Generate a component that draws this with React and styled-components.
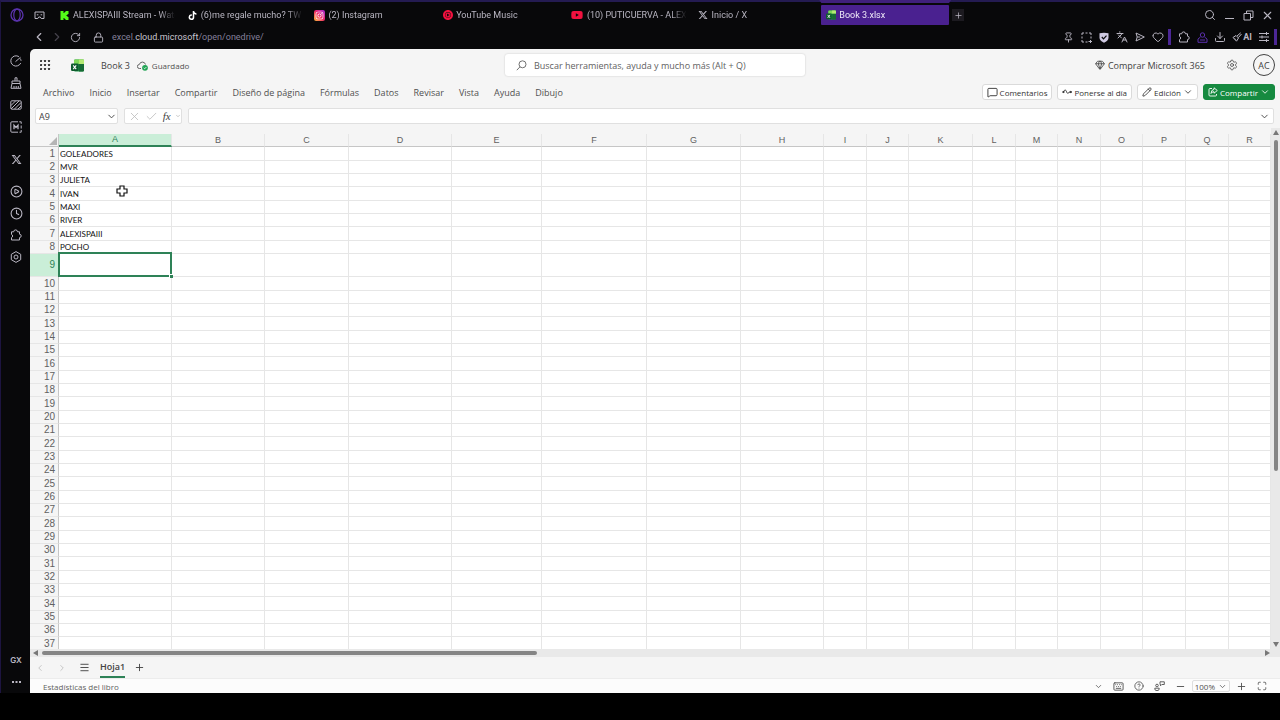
import styled, { createGlobalStyle, css } from "styled-components";
import {
  Check,
  ChevronDown,
  ChevronLeft,
  ChevronRight,
  CircleHelp,
  CirclePlay,
  Clock,
  Download,
  Gem,
  Heart,
  Keyboard,
  Languages,
  Lock,
  Maximize,
  Menu,
  MessageSquare,
  Minus,
  Pencil,
  Pin,
  Plus,
  RotateCw,
  Search,
  Settings,
  X,
} from "lucide-react";
import { FaYoutube, FaTiktok, FaXTwitter, FaInstagram } from "react-icons/fa6";
import { SiKick, SiYoutubemusic } from "react-icons/si";

const GlobalStyle = createGlobalStyle`
  * {
    box-sizing: border-box;
  }
  body {
    margin: 0;
    background: #000;
    overflow: hidden;
  }
  button, input {
    font: inherit;
    color: inherit;
    margin: 0;
    padding: 0;
    border: 0;
    background: none;
  }
  a {
    color: inherit;
    text-decoration: none;
  }
  svg {
    display: block;
    flex: none;
  }
`;

const Browser = styled.div`
  display: flex;
  flex-direction: column;
  height: 100vh;
  padding-bottom: 27px;
  background: #000;
  color: #b9b6c2;
  font-family: Roboto, "Liberation Sans", sans-serif;
  font-size: 9px;
`;

const Chrome = styled.header`
  background: #08080a;
  border-top: 2px solid #241b52;
  border-left: 1px solid #1d1440;
`;

const TabBar = styled.div`
  display: flex;
  align-items: center;
  height: 26px;
  padding: 0 7px 0 9px;
`;

const OperaButton = styled.button`
  width: 24px;
`;

const Workspace = styled.button`
  width: 21px;
`;

const Tabs = styled.nav`
  display: flex;
  flex: 0 1 895px;
  min-width: 0;
`;

const Tab = styled.a`
  position: relative;
  display: flex;
  align-items: center;
  flex: 1 1 0;
  min-width: 0;
  gap: 4px;
  height: 20px;
  padding: 0 2px 0 5px;
  border-radius: 1px;
  ${({ $active }) =>
    $active &&
    css`
      background: #4a2190;
      color: #efeaf8;
      margin-right: 1px;
      &::before {
        content: "";
        position: absolute;
        left: -2px;
        right: -2px;
        top: -5px;
        height: 3px;
        background: #40207c;
        clip-path: polygon(0 0, 100% 0, calc(100% - 2px) 100%, 2px 100%);
      }
    `}
`;

const TabIcon = styled.span`
  display: flex;
  justify-content: center;
  width: ${({ $wide }) => ($wide ? 12 : 9)}px;
`;

const TabTitle = styled.span`
  flex: 1;
  overflow: hidden;
  white-space: nowrap;
  mask-image: linear-gradient(to right, #000 80%, transparent 95%);
`;

const NewTab = styled.button`
  display: flex;
  align-items: center;
  justify-content: center;
  width: 12px;
  height: 12px;
  margin-left: 2px;
  background: #1c1a20;
`;

const WindowControls = styled.div`
  display: flex;
  align-items: center;
  gap: 7px;
  margin-left: auto;
`;

const AddressRow = styled.div`
  display: flex;
  align-items: center;
  height: 21px;
  padding: 0 3px 3px 32px;
`;

const NavButtons = styled.div`
  display: flex;
  align-items: center;
  gap: 6px;
  margin-right: 12px;
`;

const IconButton = styled.button`
  display: flex;
  align-items: center;
  justify-content: center;
  width: 12px;
  color: ${({ $color }) => $color || "inherit"};
`;

const Address = styled.div`
  display: flex;
  align-items: center;
  flex: 1;
  gap: 8px;
`;

const Url = styled.span`
  color: #85809a;
  b {
    font-weight: 400;
    color: #c9c6d0;
  }
`;

const Extensions = styled.div`
  display: flex;
  align-items: center;
  gap: 6px;
`;

const Divider = styled.span`
  width: 3px;
  height: 16px;
  margin: 0 ${({ $gap }) => $gap || 0}px 0 -2px;
  background: #4c2796;
`;

const AiButton = styled.button`
  display: flex;
  align-items: center;
  gap: 1px;
  font-weight: 700;
`;

const Main = styled.div`
  display: flex;
  flex: 1;
  min-height: 0;
  background: #08080a;
`;

const SideBar = styled.nav`
  display: flex;
  flex-direction: column;
  align-items: center;
  width: 30px;
  padding: 1px 0 0 1px;
  border-left: 1px solid #1d1440;
`;

const SideButton = styled.button`
  display: flex;
  align-items: center;
  justify-content: center;
  width: 22px;
  height: 22px;
  margin-top: ${({ $gap }) => $gap || 0}px;
  font-family: Inter, sans-serif;
  font-size: 8px;
  font-weight: 600;
`;

const SideFoot = styled.div`
  margin-top: auto;
`;

const Excel = styled.main`
  display: flex;
  flex: 1;
  flex-direction: column;
  min-width: 0;
  overflow: hidden;
  border-top-left-radius: 5px;
  background: #f5f5f5;
  color: #424242;
  font-family: "Open Sans", "Noto Sans", sans-serif;
`;

const TitleBar = styled.div`
  display: grid;
  grid-template-columns: 1fr 300px 1fr;
  align-items: center;
  height: 32px;
  padding: 0 5px;
`;

const TitleLeft = styled.div`
  display: flex;
  align-items: center;
  padding-left: 4px;
`;

const AppIcon = styled.a`
  margin: 0 17px 0 20px;
`;

const FileName = styled.span`
  margin-right: 7px;
`;

const Saved = styled.span`
  display: flex;
  align-items: center;
  gap: 4px;
  font-size: 8px;
  color: #505050;
`;

const SearchBox = styled.label`
  display: flex;
  align-items: center;
  gap: 7px;
  height: 22px;
  padding: 0 11px;
  border-radius: 3px;
  background: #fff;
  box-shadow: 0 0 2px rgba(0, 0, 0, 0.2);
  color: #616161;
  input {
    flex: 1;
    outline: 0;
  }
  input::placeholder {
    color: #616161;
    opacity: 1;
  }
`;

const TitleRight = styled.div`
  display: flex;
  align-items: center;
  justify-content: flex-end;
`;

const BuyLink = styled.a`
  display: flex;
  align-items: center;
  gap: 3px;
  margin-right: 21px;
`;

const Avatar = styled.button`
  width: 22px;
  height: 22px;
  margin-left: 15px;
  border: 1px solid #424242;
  border-radius: 50%;
`;

const Ribbon = styled.div`
  display: flex;
  align-items: center;
  justify-content: space-between;
  height: 22px;
  padding: 0 5px 0 13px;
`;

const Menus = styled.div`
  display: flex;
  gap: 15px;
`;

const MenuButton = styled.button`
  white-space: nowrap;
  color: #505050;
`;

const Actions = styled.div`
  display: flex;
  gap: 5px;
`;

const ActionButton = styled.button`
  display: flex;
  align-items: center;
  gap: 2px;
  height: 16px;
  padding: 0 4px;
  border: 1px solid ${({ $primary }) => ($primary ? "#168a40" : "#dadada")};
  border-radius: 3px;
  background: ${({ $primary }) => ($primary ? "#168a40" : "#fff")};
  color: ${({ $primary }) => ($primary ? "#fff" : "#333")};
  font-size: 8px;
  white-space: nowrap;
`;

const FormulaBar = styled.div`
  display: flex;
  gap: 6px;
  height: 16px;
  margin: 5px 6px 4px 5px;
`;

const Field = styled.div`
  display: flex;
  align-items: center;
  justify-content: space-between;
  flex: ${({ $grow }) => ($grow ? "1" : "none")};
  width: ${({ $width }) => $width || "auto"};
  padding: 0 ${({ $grow }) => ($grow ? 3 : 0)}px 0 3px;
  border: 1px solid #e0e0e0;
  border-radius: 2px;
  background: #fff;
  input {
    flex: 1;
    min-width: 0;
    outline: 0;
  }
`;

const Fx = styled.span`
  font-family: "Liberation Serif", serif;
  font-style: italic;
  font-size: 11px;
`;

const SheetArea = styled.div`
  display: flex;
  flex: 1;
  min-height: 0;
`;

const GridClip = styled.div`
  flex: 1;
  min-width: 0;
  overflow: hidden;
  padding-top: 6px;
  background: linear-gradient(#f5f5f5 19px, #fff 19px);
`;

const Table = styled.table`
  width: 100%;
  table-layout: fixed;
  border-collapse: separate;
  border-spacing: 0;
  font-family: Lato, "Liberation Sans", sans-serif;
  font-size: 8px;
  line-height: 12px;
  color: #111;
`;

const ColHead = styled.th`
  height: 13px;
  padding: 0;
  border-right: 1px solid #e6e6e6;
  border-bottom: ${({ $active }) => ($active ? "2px solid #2e8257" : "1px solid #c6c6c6")};
  background: ${({ $active }) => ($active ? "#caeed8" : "#f5f5f5")};
  color: ${({ $active }) => ($active ? "#2e8257" : "#616161")};
  font-family: "Liberation Sans", sans-serif;
  font-weight: 400;
  font-size: 9px;
  line-height: 11px;
`;

const Corner = styled(ColHead)`
  border-right-color: #c6c6c6;
  svg {
    margin: 2px 1px 0 auto;
  }
`;

const Row = styled.tr`
  height: ${({ $active }) => ($active ? 23 : 13)}px;
  &:nth-child(3n + 1) {
    height: 14px;
  }
`;

const RowHead = styled.th`
  padding: 0 3px 0 0;
  border-right: 1px solid #c6c6c6;
  border-bottom: 1px solid #e6e6e6;
  background: ${({ $active }) => ($active ? "#caeed8" : "#f5f5f5")};
  color: ${({ $active }) => ($active ? "#2e8257" : "#616161")};
  font-family: "Liberation Sans", sans-serif;
  font-weight: 400;
  font-size: 10px;
  text-align: right;
`;

const Cell = styled.td`
  padding: 0 1px;
  border-right: 1px solid #e6e6e6;
  border-bottom: 1px solid #e6e6e6;
  background: #fff;
  white-space: nowrap;
  ${({ $selected }) =>
    $selected &&
    css`
      position: relative;
      &::before {
        content: "";
        position: absolute;
        inset: -2px -1px -1px -1px;
        border: 2px solid #2e8257;
      }
      &::after {
        content: "";
        position: absolute;
        right: -2px;
        bottom: -2px;
        width: 3px;
        height: 3px;
        border: solid #fff;
        border-width: 1px 0 0 1px;
        box-sizing: content-box;
        background: #2e8257;
      }
    `}
`;

const VScroll = styled.div`
  display: flex;
  flex-direction: column;
  align-items: center;
  width: 9px;
  padding: 2px 0;
  background: #e9e9e9;
  color: #777;
`;

const VThumb = styled.div`
  width: 4px;
  height: 64%;
  margin: 4px 0 auto;
  border-radius: 2px;
  background: #858585;
`;

const HScroll = styled.div`
  display: flex;
  align-items: center;
  height: 8px;
  padding: 0 10px 0 3px;
  background: #e9e9e9;
  color: #777;
`;

const HThumb = styled.div`
  width: 40%;
  height: 4px;
  margin: 0 auto 0 3px;
  border-radius: 2px;
  background: #858585;
`;

const SheetBar = styled.div`
  display: flex;
  align-items: center;
  height: 21px;
  padding-left: 4px;
`;

const SheetNav = styled.div`
  display: flex;
  align-items: center;
  gap: 10px;
  color: #bdbdbd;
`;

const SheetTab = styled.button`
  height: 21px;
  margin: 0 8px 0 10px;
  border-bottom: 2px solid #2e8257;
  font-weight: 600;
`;

const StatusBar = styled.footer`
  display: flex;
  align-items: center;
  height: 15px;
  padding: 0 13px;
  border-top: 1px solid #ececec;
  background: #fcfcfc;
  color: #616161;
  font-size: 8px;
`;

const StatusTools = styled.div`
  display: flex;
  align-items: center;
  gap: 10px;
  margin-left: auto;
  color: #505050;
`;

const Zoom = styled.button`
  display: flex;
  align-items: center;
  gap: 3px;
  height: 12px;
  margin: 0 -4px;
  padding: 0 2px;
  border: 1px solid #dedede;
  border-radius: 2px;
`;

const Cursor = styled.div`
  position: absolute;
  left: 116px;
  top: 185px;
`;

const OperaLogo = () => (
  <svg width="14" height="14" viewBox="0 0 14 14" fill="none" stroke="#5a33ad">
    <circle cx="7" cy="7" r="6" strokeWidth="1.3" />
    <ellipse cx="7" cy="7" rx="3.2" ry="5.8" strokeWidth="1.2" />
  </svg>
);

const GogglesIcon = () => (
  <svg width="11" height="9" viewBox="0 0 11 9" fill="none" stroke="currentColor">
    <path d="M1 1h9v6.5H7.2L6.3 6H4.7L3.8 7.5H1z" />
    <path d="M2.8 3.8h1.6M6.6 3.8h1.6" />
  </svg>
);

const ExcelIcon = ({ size = 13 }) => (
  <svg width={size} height={size} viewBox="0 0 13 13">
    <rect x="3" y="0.5" width="10" height="12" rx="1.2" fill="#1f9448" />
    <path d="M4.2 0.5H12a1 1 0 0 1 1 1V5H3V1.7a1.2 1.2 0 0 1 1.2-1.2z" fill="#7ed957" />
    <path d="M8 0.5h4a1 1 0 0 1 1 1V5H8z" fill="#b4ea74" />
    <path d="M8 5h5v6.3a1.2 1.2 0 0 1-1.2 1.2H8z" fill="#166b35" />
    <rect x="0" y="4.5" width="7.5" height="7.5" rx="1.2" fill="#0e5c2e" />
    <path d="M2.2 6.4l3 3.8M5.2 6.4l-3 3.8" stroke="#fff" strokeWidth="1.1" />
  </svg>
);

const GaugeIcon = () => (
  <svg width="12" height="12" viewBox="0 0 12 12" fill="none" stroke="currentColor" strokeLinecap="round">
    <path d="M8.6 1.4A5.2 5.2 0 1 0 10.6 8.4M11 5.4a5 5 0 0 0-.6-1.6M5.8 6.4l4.4-3.8" />
  </svg>
);

const BroomIcon = () => (
  <svg width="12" height="12" viewBox="0 0 12 12" fill="none" stroke="currentColor">
    <path d="M5 3.8V.8h2v3M2 6.5V4h8v2.5M2 6.5h8l1 4.8H1zM4 11V9M6.2 11V9M8.3 11V9" />
  </svg>
);

const HatchIcon = () => (
  <svg width="12" height="10" viewBox="0 0 12 10" fill="none" stroke="currentColor">
    <rect x="0.8" y="0.8" width="10.4" height="8.4" rx="1" />
    <path d="M1 5.5L5.5 1M1 9l8-8M4.5 9L11 2.5M8 9l3-3" />
  </svg>
);

const ModsIcon = () => (
  <svg width="12" height="12" viewBox="0 0 12 12" fill="none" stroke="currentColor">
    <path d="M8 .8H1.8a1 1 0 0 0-1 1v8.4a1 1 0 0 0 1 1H8M9.3 .8h1.9v2M11.2 4.500v3M11.2 9v2.2H9.5" />
    <path d="M4 8.200V4.300L6 6.500l2-2.200v3.900" strokeWidth="1.3" />
  </svg>
);

const PuzzleIcon = () => (
  <svg width="12" height="12" viewBox="0 0 12 12" fill="none" stroke="currentColor" strokeLinejoin="round">
    <path d="M1.5 2.8h2.2a1.9 1.9 0 0 1 3.8 0h2v2.4a1.7 1.7 0 0 1 0 3.4v2.4h-8V8.6a1.7 1.7 0 0 0 0-3.200z" />
  </svg>
);

const HexSettings = () => (
  <svg width="12" height="12" viewBox="0 0 12 12" fill="none" stroke="currentColor" strokeLinejoin="round">
    <path d="M6 .6l4.7 2.7v5.4L6 11.4 1.3 8.7V3.3z" />
    <circle cx="6" cy="6" r="2" />
  </svg>
);

const SnapshotIcon = () => (
  <svg width="11" height="11" viewBox="0 0 11 11" fill="none" stroke="currentColor">
    <path d="M1 3V1h2M4.5 1h2M8 1h2v2M10 4.5v2M1 4.5v2M1 8v2h2M4.5 10h2M7.5 9.5H11M9.5 8v3" />
  </svg>
);

const ShieldIcon = () => (
  <svg width="10" height="11" viewBox="0 0 10 11">
    <path d="M.5 1.2Q5 .2 9.5 1.2V6Q9 9 5 10.7 1 9 .5 6z" fill="#cfc9e2" />
    <path d="M2.8 5l1.7 1.8 3-3.2" fill="none" stroke="#08080a" strokeWidth="1.2" />
  </svg>
);

const SendIcon = () => (
  <svg width="10" height="10" viewBox="0 0 10 10" fill="none" stroke="currentColor" strokeLinejoin="round">
    <path d="M1 1l8.3 4L1 9l1.2-4zM2.2 5h3" />
  </svg>
);

const PersonIcon = () => (
  <svg width="11" height="11" viewBox="0 0 11 11" fill="none" stroke="currentColor">
    <circle cx="5.5" cy="3" r="2.2" />
    <path d="M3.5 5L1 7v3.3h9V7L7.5 5M3 8h5" />
  </svg>
);

const BrushIcon = () => (
  <svg width="10" height="10" viewBox="0 0 10 10" fill="none" stroke="currentColor" strokeLinejoin="round">
    <path d="M1 5.5l3-2 2.5 2.5-2 3.2zM5 4L8.7.8M6.5 5.5l3-3.5M2.5 6.5l1.2 1" />
  </svg>
);

const SlidersIcon = () => (
  <svg width="10" height="10" viewBox="0 0 10 10" fill="none" stroke="currentColor">
    <path d="M0 1.5h10M0 5h10M0 8.5h10M7.5 0v3M3 3.5v3M7.5 7v3" />
  </svg>
);

const WaffleIcon = () => (
  <svg width="11" height="11" viewBox="0 0 11 11" fill="#333">
    {[0, 4, 8].map((y) =>
      [0, 4, 8].map((x) => <rect key={`${x}-${y}`} x={x} y={y} width="2" height="2" rx="0.4" />)
    )}
  </svg>
);

const CloudSaved = () => (
  <svg width="11" height="11" viewBox="0 0 11 11" fill="none">
    <path d="M4 8.5H2.5a2 2 0 0 1-.2-4 3.2 3.2 0 0 1 6.2 0" stroke="#555" strokeWidth="0.9" />
    <circle cx="8" cy="7.8" r="2.9" fill="#22a455" />
    <path d="M6.7 7.9l1 .9 1.7-1.8" stroke="#fff" strokeWidth="0.8" />
  </svg>
);

const SearchIcon = () => (
  <svg width="11" height="11" viewBox="0 0 11 11" fill="none" stroke="#616161" strokeWidth="0.9">
    <circle cx="6.5" cy="4.3" r="3.5" />
    <path d="M4 6.8L.8 10.2" />
  </svg>
);

const CatchUpIcon = () => (
  <svg width="10" height="8" viewBox="0 0 10 8" fill="none" stroke="#333" strokeLinecap="round">
    <path d="M1.5 3.8C2.5 1.5 3.8 1.5 4.5 3.6S6.3 6 7.2 4h1.3" />
    <circle cx="1.3" cy="4" r="0.6" fill="#333" />
    <circle cx="8.7" cy="4" r="0.6" fill="#333" />
  </svg>
);

const ShareIcon = () => (
  <svg width="10" height="10" viewBox="0 0 10 10" fill="none" stroke="#fff" strokeWidth="0.9" strokeLinejoin="round">
    <path d="M4 1.5H2a1 1 0 0 0-1 1V8a1 1 0 0 0 1 1h5.5a1 1 0 0 0 1-1V7" />
    <path d="M6 .8l3.3 2.700L6 6.2V4.700Q4 4.600 3 6.500 3.200 2.700 6 2.400z" />
  </svg>
);

const FeedbackIcon = () => (
  <svg width="11" height="10" viewBox="0 0 11 10" fill="none" stroke="currentColor" strokeWidth="0.9">
    <circle cx="3" cy="4.5" r="1.3" />
    <path d="M.8 7.2h4.4V8A2.2 1.6 0 0 1 .8 8zM6 .8h4.3v2.7H7.8L6.5 4.8V3.5H6z" />
  </svg>
);

const InstagramBadge = () => (
  <svg width="11" height="11" viewBox="0 0 10 10" fill="none">
    <defs>
      <linearGradient id="insta" x1="0" y1="1" x2="1" y2="0">
        <stop offset="0" stopColor="#ffc03d" />
        <stop offset="0.5" stopColor="#f0286a" />
        <stop offset="1" stopColor="#a32bdc" />
      </linearGradient>
    </defs>
    <rect width="10" height="10" rx="2" fill="url(#insta)" />
    <FaInstagram x="1" y="1" size={8} color="#fff" />
  </svg>
);

const Triangle = ({ d }) => (
  <svg width="6" height="6" viewBox="0 0 6 6" fill="currentColor">
    <path d={d} />
  </svg>
);

const tabs = [
  { title: "ALEXISPAIII Stream - Watc", icon: <SiKick size={9} color="#53fc18" /> },
  { title: "(6)me regale mucho? TWI", icon: <FaTiktok size={9} color="#fff" /> },
  { title: "(2) Instagram", icon: <InstagramBadge /> },
  { title: "YouTube Music", icon: <SiYoutubemusic size={10} color="#f2113f" /> },
  { title: "(10) PUTICUERVA - ALEXI", icon: <FaYoutube size={12} color="#f2113f" />, wide: true },
  { title: "Inicio / X", icon: <FaXTwitter size={10} /> },
  { title: "Book 3.xlsx", icon: <ExcelIcon size={10} />, active: true },
];

const menus = [
  "Archivo",
  "Inicio",
  "Insertar",
  "Compartir",
  "Diseño de página",
  "Fórmulas",
  "Datos",
  "Revisar",
  "Vista",
  "Ayuda",
  "Dibujo",
];

const columns = [
  ["A", 113],
  ["B", 93],
  ["C", 84],
  ["D", 103],
  ["E", 90],
  ["F", 105],
  ["G", 94],
  ["H", 83],
  ["I", 43],
  ["J", 42],
  ["K", 64],
  ["L", 43],
  ["M", 42],
  ["N", 43],
  ["O", 42],
  ["P", 43],
  ["Q", 43],
  ["R", 42],
];

const values = ["GOLEADORES", "MVR", "JULIETA", "IVAN", "MAXI", "RIVER", "ALEXISPAIII", "POCHO"];
const rows = Array.from({ length: 37 }, (_, i) => i + 1);

const App = () => {
  return (
    <Browser>
      <GlobalStyle />
      <Chrome>
        <TabBar>
          <OperaButton aria-label="Opera">
            <OperaLogo />
          </OperaButton>
          <Workspace aria-label="Workspace">
            <GogglesIcon />
          </Workspace>
          <Tabs>
            {tabs.map((tab) => (
              <Tab key={tab.title} href="#" $active={tab.active}>
                <TabIcon $wide={tab.wide}>{tab.icon}</TabIcon>
                <TabTitle>{tab.title}</TabTitle>
              </Tab>
            ))}
          </Tabs>
          <NewTab aria-label="New tab">
            <Plus size={9} />
          </NewTab>
          <WindowControls>
            <IconButton aria-label="Search tabs">
              <Search size={12} />
            </IconButton>
            <IconButton aria-label="Minimize">
              <svg width="9" height="10" stroke="currentColor">
                <path d="M0 8.5h9" />
              </svg>
            </IconButton>
            <IconButton aria-label="Restore">
              <svg width="11" height="11" fill="none" stroke="currentColor">
                <path d="M1 3.5h6.5V10H1zM3.5 3.5V1H10v6.5H7.5" />
              </svg>
            </IconButton>
            <IconButton aria-label="Close">
              <X size={13} />
            </IconButton>
          </WindowControls>
        </TabBar>
        <AddressRow>
          <NavButtons>
            <IconButton aria-label="Back">
              <ChevronLeft size={14} />
            </IconButton>
            <IconButton aria-label="Forward" $color="#45424c">
              <ChevronRight size={14} />
            </IconButton>
            <IconButton aria-label="Reload">
              <RotateCw size={11} />
            </IconButton>
          </NavButtons>
          <Address>
            <Lock size={11} />
            <Url>
              excel.<b>cloud.microsoft</b>/open/onedrive/
            </Url>
          </Address>
          <Extensions>
            <IconButton aria-label="Pin">
              <Pin size={11} />
            </IconButton>
            <IconButton aria-label="Snapshot">
              <SnapshotIcon />
            </IconButton>
            <IconButton aria-label="Ad blocker">
              <ShieldIcon />
            </IconButton>
            <IconButton aria-label="Translate">
              <Languages size={12} />
            </IconButton>
            <IconButton aria-label="Send">
              <SendIcon />
            </IconButton>
            <IconButton aria-label="Favorite">
              <Heart size={12} />
            </IconButton>
            <Divider $gap={1} />
            <IconButton aria-label="Extensions">
              <PuzzleIcon />
            </IconButton>
            <IconButton aria-label="Profile" $color="#5b30ad">
              <PersonIcon />
            </IconButton>
            <IconButton aria-label="Downloads">
              <Download size={12} />
            </IconButton>
            <AiButton>
              <BrushIcon />
              AI
            </AiButton>
            <IconButton aria-label="Easy setup">
              <SlidersIcon />
            </IconButton>
            <Divider />
          </Extensions>
        </AddressRow>
      </Chrome>
      <Main>
        <SideBar>
          <SideButton aria-label="GX Control">
            <GaugeIcon />
          </SideButton>
          <SideButton aria-label="GX Cleaner">
            <BroomIcon />
          </SideButton>
          <SideButton aria-label="Wallpapers">
            <HatchIcon />
          </SideButton>
          <SideButton aria-label="Mods">
            <ModsIcon />
          </SideButton>
          <SideButton aria-label="X" $gap={10}>
            <FaXTwitter size={11} />
          </SideButton>
          <SideButton aria-label="Player" $gap={10}>
            <CirclePlay size={13} />
          </SideButton>
          <SideButton aria-label="History">
            <Clock size={13} />
          </SideButton>
          <SideButton aria-label="Extensions">
            <PuzzleIcon />
          </SideButton>
          <SideButton aria-label="Settings">
            <HexSettings />
          </SideButton>
          <SideFoot>
            <SideButton>GX</SideButton>
            <SideButton aria-label="More">
              <svg width="9" height="3" fill="currentColor">
                <path d="M0 0h2v2H0zM3.5 0h2v2h-2zM7 0h2v2H7z" />
              </svg>
            </SideButton>
          </SideFoot>
        </SideBar>
        <Excel>
          <TitleBar>
            <TitleLeft>
              <IconButton aria-label="Apps">
                <WaffleIcon />
              </IconButton>
              <AppIcon href="#" aria-label="Excel">
                <ExcelIcon />
              </AppIcon>
              <FileName>Book 3</FileName>
              <Saved>
                <CloudSaved />
                Guardado
              </Saved>
            </TitleLeft>
            <SearchBox>
              <SearchIcon />
              <input aria-label="Buscar" placeholder="Buscar herramientas, ayuda y mucho más (Alt + Q)" />
            </SearchBox>
            <TitleRight>
              <BuyLink href="#">
                <Gem size={10} />
                Comprar Microsoft 365
              </BuyLink>
              <IconButton aria-label="Configuración">
                <Settings size={12} strokeWidth={1.5} />
              </IconButton>
              <Avatar>AC</Avatar>
            </TitleRight>
          </TitleBar>
          <Ribbon>
            <Menus>
              {menus.map((menu) => (
                <MenuButton key={menu}>{menu}</MenuButton>
              ))}
            </Menus>
            <Actions>
              <ActionButton>
                <MessageSquare size={11} />
                Comentarios
              </ActionButton>
              <ActionButton>
                <CatchUpIcon />
                Ponerse al día
              </ActionButton>
              <ActionButton>
                <Pencil size={10} />
                Edición
                <ChevronDown size={10} />
              </ActionButton>
              <ActionButton $primary>
                <ShareIcon />
                Compartir
                <ChevronDown size={10} />
              </ActionButton>
            </Actions>
          </Ribbon>
          <FormulaBar>
            <Field $width="83px">
              <input aria-label="Cuadro de nombres" defaultValue="A9" />
              <ChevronDown size={11} />
            </Field>
            <Field $width="58px">
              <X size={13} color="#bdbdbd" strokeWidth={1.5} />
              <Check size={13} color="#bdbdbd" strokeWidth={1.5} />
              <Fx>fx</Fx>
              <ChevronDown size={6} color="#999" />
            </Field>
            <Field $grow>
              <input aria-label="Barra de fórmulas" />
              <ChevronDown size={11} />
            </Field>
          </FormulaBar>
          <SheetArea>
            <GridClip>
              <Table>
                <colgroup>
                  <col width="29" />
                  {columns.map(([name, width]) => (
                    <col key={name} width={width} />
                  ))}
                </colgroup>
                <thead>
                  <tr>
                    <Corner>
                      <svg width="8" height="8" fill="#b5b5b5">
                        <path d="M8 0v8H0z" />
                      </svg>
                    </Corner>
                    {columns.map(([name]) => (
                      <ColHead key={name} $active={name === "A"}>
                        {name}
                      </ColHead>
                    ))}
                  </tr>
                </thead>
                <tbody>
                  {rows.map((row) => (
                    <Row key={row} $active={row === 9}>
                      <RowHead $active={row === 9}>{row}</RowHead>
                      {columns.map(([name]) => (
                        <Cell key={name} $selected={name === "A" && row === 9}>
                          {name === "A" && values[row - 1]}
                        </Cell>
                      ))}
                    </Row>
                  ))}
                </tbody>
              </Table>
            </GridClip>
            <VScroll>
              <Triangle d="M3 0l3 5H0z" />
              <VThumb />
              <Triangle d="M0 1h6L3 6z" />
            </VScroll>
          </SheetArea>
          <HScroll>
            <Triangle d="M5 0v6L0 3z" />
            <HThumb />
            <Triangle d="M1 0v6l5-3z" />
          </HScroll>
          <SheetBar>
            <SheetNav>
              <IconButton aria-label="Hoja anterior">
                <ChevronLeft size={10} />
              </IconButton>
              <IconButton aria-label="Hoja siguiente">
                <ChevronRight size={10} />
              </IconButton>
              <IconButton aria-label="Todas las hojas" $color="#424242">
                <Menu size={11} />
              </IconButton>
            </SheetNav>
            <SheetTab>Hoja1</SheetTab>
            <IconButton aria-label="Nueva hoja">
              <Plus size={11} />
            </IconButton>
          </SheetBar>
          <StatusBar>
            Estadísticas del libro
            <StatusTools>
              <ChevronDown size={9} />
              <Keyboard size={11} />
              <CircleHelp size={10} />
              <FeedbackIcon />
              <Minus size={11} />
              <Zoom>
                100%
                <ChevronDown size={9} />
              </Zoom>
              <Plus size={11} />
              <Maximize size={10} />
            </StatusTools>
          </StatusBar>
        </Excel>
      </Main>
      <Cursor>
        <svg width="12" height="12" viewBox="0 0 12 12" fill="#fff" stroke="#111" strokeWidth="1.2">
          <path d="M4 1h4v3h3v4H8v3H4V8H1V4h3z" />
        </svg>
      </Cursor>
    </Browser>
  );
};

export default App;
